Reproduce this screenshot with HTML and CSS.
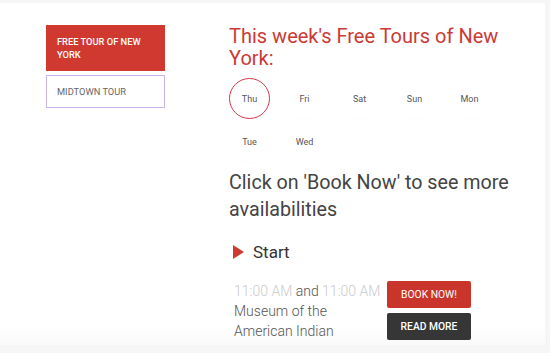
FILE: index.html
```html
<!DOCTYPE html>
<html>

<head>
    <title>Free Tours of New York</title>
    <link rel="stylesheet" href="styles.css">
</head>

<body>
    <div class="page">
        <div class="sidebar">
            <a href="#" class="tour-link active">FREE TOUR OF NEW YORK</a>
            <a href="#" class="tour-link">MIDTOWN TOUR</a>
        </div>

        <div class="main">
            <h1>This week's Free Tours of New York:</h1>

            <div class="days">
                <span class="day selected">Thu</span>
                <span class="day">Fri</span>
                <span class="day">Sat</span>
                <span class="day">Sun</span>
                <span class="day">Mon</span>
                <span class="day">Tue</span>
                <span class="day">Wed</span>
            </div>

            <h2>Click on 'Book Now' to see more availabilities</h2>

            <div class="start">
                <span class="arrow"></span>
                <span>Start</span>
            </div>

            <div class="tour-row">
                <div class="tour-info">
                    <span class="time">11:00 AM</span> and <span class="time">11:00 AM</span>
                    Museum of the American Indian
                </div>
                <div class="tour-buttons">
                    <a href="#" class="btn btn-book">BOOK NOW!</a>
                    <a href="#" class="btn btn-more">READ MORE</a>
                </div>
            </div>
        </div>
    </div>
</body>

</html>
```

FILE: styles.css
```css
body {
    margin: 0;
    background-color: #f6f6f6;
    font-family: 'Roboto', 'Liberation Sans', sans-serif;
    color: #444;
}

.page {
    display: flex;
    width: 545px;
    height: 342px;
    margin-top: 3px;
    padding-left: 46px;
    box-sizing: border-box;
    background: linear-gradient(to bottom, #fff 94%, #fafafa 100%);
    overflow: hidden;
}

.sidebar {
    width: 119px;
    padding-top: 22px;
    display: flex;
    flex-direction: column;
    gap: 4px;
}

.tour-link {
    padding: 0 10px;
    font-size: 9.3px;
    line-height: 13px;
    text-decoration: none;
    color: #666;
    border: 1px solid #c8b6ea;
    height: 33px;
    box-sizing: border-box;
    display: flex;
    align-items: center;
}

.tour-link.active {
    background-color: #d0392f;
    border-color: #d0392f;
    color: #fff;
    font-weight: 500;
    height: 46px;
}

.main {
    margin-left: 64px;
    padding-top: 22px;
    width: 300px;
}

h1 {
    margin: 0;
    font-size: 20px;
    line-height: 22px;
    font-weight: 400;
    color: #cc3a34;
}

.days {
    display: flex;
    flex-wrap: wrap;
    column-gap: 14px;
    row-gap: 2px;
    margin-top: 9px;
    width: 290px;
}

.day {
    width: 41px;
    height: 41px;
    border-radius: 50%;
    display: flex;
    align-items: center;
    justify-content: center;
    font-size: 9px;
    color: #555;
    box-shadow: 0 1px 3px rgba(0, 0, 0, 0.015);
    box-sizing: border-box;
}

.day.selected {
    border: 1.5px solid #d0394a;
    box-shadow: none;
}

h2 {
    margin: 7px 0 0;
    font-size: 19.7px;
    line-height: 27px;
    font-weight: 400;
    color: #444;
}

.start {
    display: flex;
    align-items: center;
    gap: 9px;
    margin-top: 19px;
    margin-left: 4px;
    font-size: 17px;
    color: #333;
}

.arrow {
    width: 0;
    height: 0;
    border-top: 7px solid transparent;
    border-bottom: 7px solid transparent;
    border-left: 11px solid #d0392f;
}

.tour-row {
    display: flex;
    gap: 4px;
    margin-top: 19px;
}

.tour-info {
    width: 154px;
    font-size: 14px;
    line-height: 20px;
    font-weight: 300;
    color: #555;
    padding-left: 5px;
    box-sizing: border-box;
}

.time {
    color: #ccc;
}

.tour-buttons {
    display: flex;
    flex-direction: column;
    gap: 5px;
}

.btn {
    display: flex;
    align-items: center;
    justify-content: center;
    width: 84px;
    height: 27px;
    border-radius: 2px;
    font-size: 10.3px;
    text-decoration: none;
    color: #fff;
}

.btn-book {
    background-color: #c9352a;
}

.btn-more {
    background-color: #363636;
    font-weight: 500;
}
```
